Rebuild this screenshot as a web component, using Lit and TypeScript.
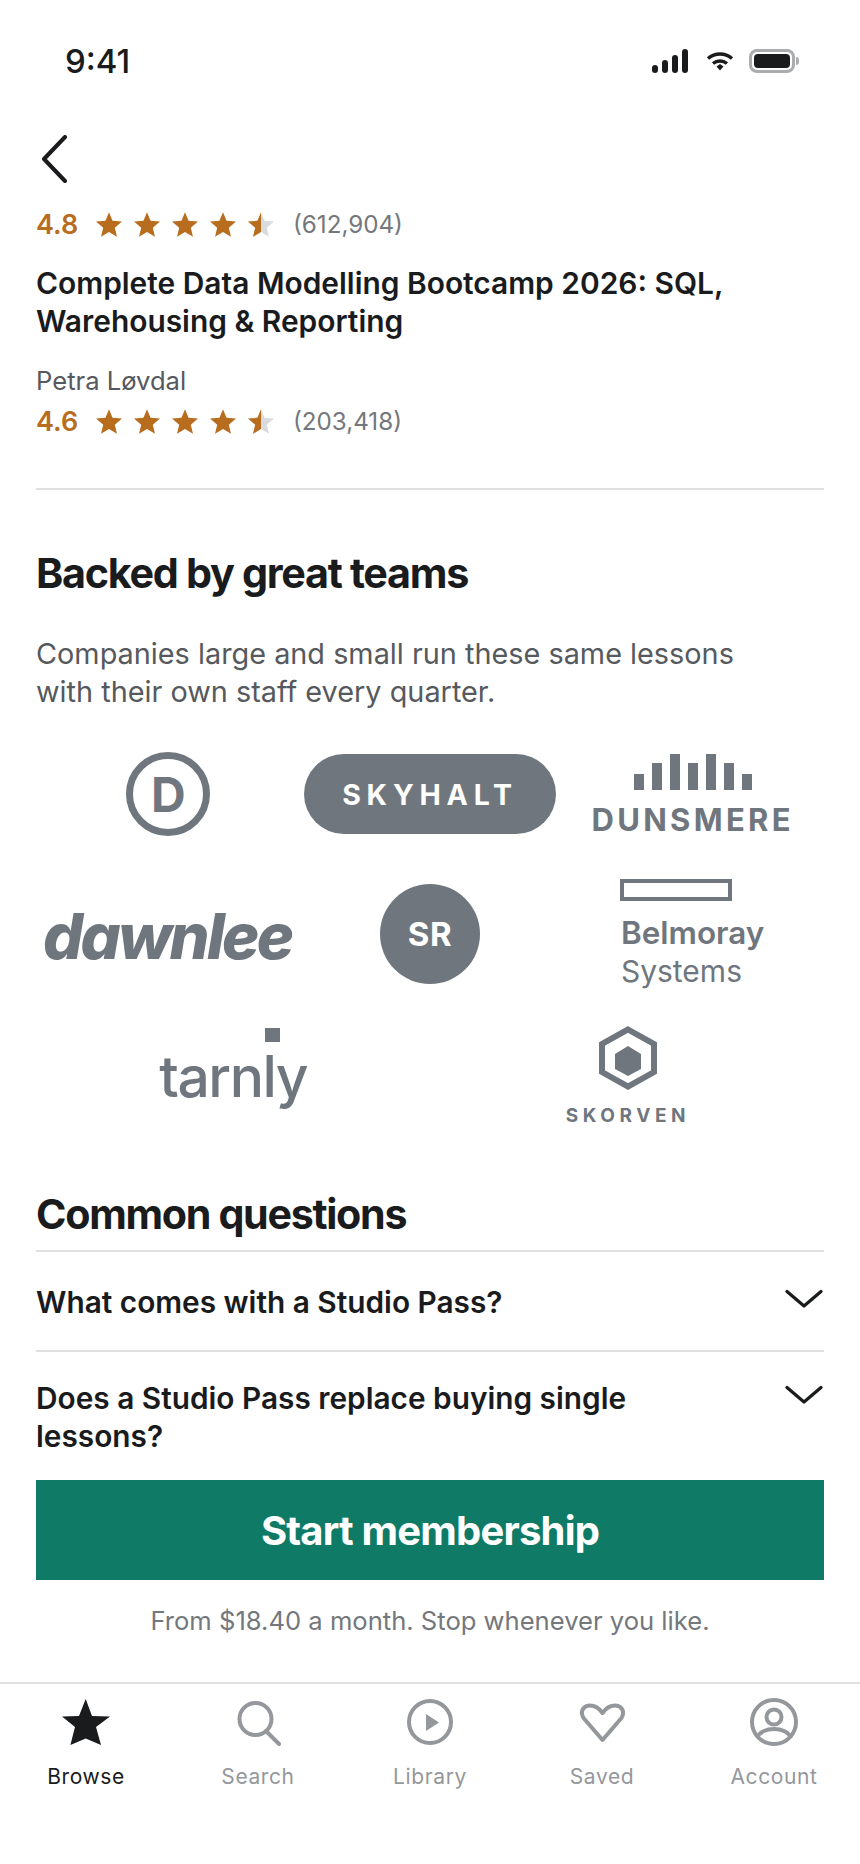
import { LitElement, html, css, svg } from 'lit';
import { customElement } from 'lit/decorators.js';

const STAR = '12,1 15.1,8.6 23.4,9.3 17.1,14.6 19,22.7 12,18.4 5,22.7 6.9,14.6 0.6,9.3 8.9,8.6';
const HALF = '12,1 12,18.4 5,22.7 6.9,14.6 0.6,9.3 8.9,8.6';

const star = (half = false) => html`<svg class="star" viewBox="0.6 1 22.8 21.7">
  ${half
    ? svg`<polygon points=${STAR} fill="#d9dbde"></polygon><polygon points=${HALF} fill="#b86d1e"></polygon>`
    : svg`<polygon points=${STAR} fill="#b86d1e"></polygon>`}
</svg>`;

const rating = (value: string, count: string) => html`<div class="rating">
  <span class="value">${value}</span>
  <span class="stars">${star()}${star()}${star()}${star()}${star(true)}</span>
  <span class="count">${count}</span>
</div>`;

const chevron = html`<svg class="chev" viewBox="0 0 38 20" fill="none" stroke="#1a1b1d" stroke-width="3.2" stroke-linecap="round" stroke-linejoin="round">
  <path d="M2 2.5 19 17 36 2.5"></path>
</svg>`;

const tabs = [
  {
    label: 'Browse',
    active: true,
    icon: svg`<polygon points="24.7,1 31,18 49,18.5 35,29 40,47 24.7,40.5 9.4,47 14,29 1,18.5 18,18" fill="#1a1b1d"></polygon>`
  },
  {
    label: 'Search',
    icon: svg`<circle cx="22.5" cy="21" r="16" fill="none" stroke="#94979b" stroke-width="4"></circle><path d="M33 33 46 46" stroke="#94979b" stroke-width="4" stroke-linecap="round"></path>`
  },
  {
    label: 'Library',
    icon: svg`<circle cx="25" cy="24" r="21" fill="none" stroke="#94979b" stroke-width="4"></circle><polygon points="21,16 34,24.5 21,33" fill="#94979b"></polygon>`
  },
  {
    label: 'Saved',
    icon: svg`<path d="M25.5 42 6.5 20C2 12 8 7.5 13 7.5 18 7.5 22 10 25.5 15 29 10 33 7.5 38 7.5 43 7.5 49 12 44.5 20Z" fill="none" stroke="#94979b" stroke-width="4" stroke-linejoin="round"></path>`
  },
  {
    label: 'Account',
    icon: svg`<circle cx="25" cy="24" r="22" fill="none" stroke="#94979b" stroke-width="4"></circle><circle cx="25" cy="19" r="7.5" fill="none" stroke="#94979b" stroke-width="4"></circle><path d="M8 40C12 28 38 28 42 40" fill="none" stroke="#94979b" stroke-width="4"></path>`
  }
];

@customElement('app-root')
export default class AppRoot extends LitElement {
  static styles = css`
    :host {
      display: block;
      width: 860px;
      height: 1864px;
      background: #fff;
      font-family: Inter, 'Liberation Sans', sans-serif;
      color: #1a1b1d;
      overflow: hidden;
    }

    .status {
      display: flex;
      align-items: center;
      justify-content: space-between;
      height: 24px;
      padding: 49px 61px 24px 65px;
    }

    .time {
      font-size: 33px;
      font-weight: 500;
      line-height: 24px;
    }

    .status-icons {
      display: flex;
      align-items: center;
      gap: 17px;
    }

    .signal {
      display: flex;
      align-items: flex-end;
      gap: 4px;
      height: 24px;
    }

    .signal i {
      width: 6px;
      border-radius: 3px;
      background: #1a1b1d;
    }

    .wifi {
      width: 28px;
      height: 20px;
      margin: 0 -2px 0 1px;
    }

    .battery {
      display: flex;
      align-items: center;
      gap: 1px;
    }

    .battery-body {
      width: 46px;
      height: 24px;
      box-sizing: border-box;
      border: 3px solid #aaacae;
      border-radius: 8px;
      padding: 2px;
    }

    .battery-body i {
      display: block;
      height: 100%;
      border-radius: 4px;
      background: #1a1b1d;
    }

    .battery-nub {
      width: 3px;
      height: 8px;
      border-radius: 0 3px 3px 0;
      background: #aaacae;
    }

    .page {
      padding: 0 36px;
    }

    .back {
      display: block;
      width: 28px;
      height: 48px;
      margin: 38px 0 0 5px;
    }

    .rating {
      display: flex;
      align-items: center;
      height: 30px;
    }

    .value {
      width: 60px;
      font-size: 27px;
      font-weight: 600;
      color: #b86d1e;
    }

    .stars {
      display: flex;
      gap: 12px;
      width: 197px;
    }

    .star {
      width: 26px;
      height: 25px;
    }

    .count {
      font-size: 24.2px;
      color: #74777b;
    }

    .top-rating {
      margin-top: 26px;
    }

    h1 {
      margin: 25px 0 0;
      font-size: 29.9px;
      font-weight: 600;
      line-height: 38px;
    }

    .author {
      margin: 23px 0 7px;
      font-size: 25.6px;
      line-height: 36px;
      color: #56595d;
    }

    .rule {
      height: 2px;
      background: #dfe0e2;
    }

    .course-rule {
      margin-top: 52px;
    }

    h2 {
      margin: 0;
      font-size: 41.3px;
      font-weight: 700;
      letter-spacing: -1.3px;
      line-height: 48px;
    }

    .teams-title {
      margin-top: 59px;
    }

    .lede {
      margin: 38px 0 0;
      font-size: 28.85px;
      line-height: 38px;
      color: #56595d;
    }

    .logo-row {
      display: grid;
      grid-template-columns: repeat(3, 1fr);
      align-items: center;
      justify-items: center;
      color: #6f767e;
    }

    .logo-row.first {
      height: 92px;
      margin-top: 37px;
    }

    .logo-row.second {
      height: 118px;
      margin-top: 35px;
    }

    .logo-row.third {
      display: flex;
      justify-content: space-around;
      align-items: flex-start;
      height: 96px;
      margin: 33px 0 0 -6px;
      padding-right: 4.5px;
    }

    .disc {
      display: flex;
      align-items: center;
      justify-content: center;
      width: 84px;
      height: 84px;
      margin-left: 2px;
      box-sizing: border-box;
      border: 7px solid currentColor;
      border-radius: 50%;
      font-size: 48px;
      font-weight: 700;
    }

    .pill {
      display: flex;
      align-items: center;
      justify-content: center;
      width: 252px;
      height: 80px;
      border-radius: 40px;
      background: currentColor;
    }

    .pill span {
      color: #fff;
      font-size: 28.5px;
      font-weight: 700;
      letter-spacing: 5.8px;
    }

    .dunsmere {
      display: flex;
      flex-direction: column;
      align-items: center;
      gap: 18px;
      margin-bottom: 2px;
    }

    .bars {
      display: flex;
      align-items: flex-end;
      gap: 8px;
      height: 36px;
    }

    .bars i {
      width: 10px;
      background: currentColor;
    }

    .dunsmere span {
      font-size: 31px;
      font-weight: 700;
      letter-spacing: 3.3px;
      line-height: 24px;
    }

    .dawnlee {
      padding-top: 4px;
      font-size: 63px;
      font-style: italic;
      font-weight: 800;
      letter-spacing: -2.7px;
      line-height: 64px;
    }

    .sr {
      display: flex;
      align-items: center;
      justify-content: center;
      width: 100px;
      height: 100px;
      border-radius: 50%;
      background: currentColor;
    }

    .sr span {
      color: #fff;
      font-size: 33px;
      font-weight: 700;
      letter-spacing: 0.5px;
    }

    .belmoray {
      display: flex;
      flex-direction: column;
      align-items: flex-start;
      font-size: 30px;
      line-height: 38px;
    }

    .belmoray i {
      display: block;
      width: 112px;
      height: 22px;
      box-sizing: border-box;
      border: 4px solid currentColor;
      margin: 0 0 13px -1px;
    }

    .belmoray b {
      font-size: 31.5px;
      font-weight: 600;
    }

    .tarnly {
      position: relative;
      font-size: 57px;
      font-weight: 500;
      letter-spacing: -1.5px;
      line-height: 72px;
      padding-top: 15px;
    }

    .tarnly i {
      position: absolute;
      top: 2px;
      left: 106px;
      width: 15px;
      height: 14px;
      background: currentColor;
    }

    .skorven {
      display: flex;
      flex-direction: column;
      align-items: center;
      gap: 18px;
    }

    .hex {
      width: 60px;
      height: 64px;
    }

    .skorven span {
      font-size: 19px;
      font-weight: 700;
      letter-spacing: 4.6px;
      line-height: 16px;
    }

    .faq-title {
      margin-top: 68px;
      padding-bottom: 12px;
      font-size: 41.2px;
    }

    .faq {
      display: flex;
      justify-content: space-between;
      align-items: flex-start;
      border-top: 2px solid #dfe0e2;
      font-size: 29.8px;
      font-weight: 600;
      line-height: 38px;
    }

    .faq.one {
      height: 100px;
      padding-top: 31px;
      box-sizing: border-box;
    }

    .faq.two {
      height: 130px;
      padding-top: 27px;
      box-sizing: border-box;
    }

    .faq span {
      width: 640px;
    }

    .chev {
      width: 38px;
      height: 20px;
      margin: 6px 1px 0 0;
    }

    .cta {
      display: flex;
      align-items: center;
      justify-content: center;
      height: 100px;
      background: #0f7b66;
      color: #fff;
      font-size: 40px;
      font-weight: 650;
      letter-spacing: -0.8px;
    }

    .note {
      margin-top: 26px;
      text-align: center;
      font-size: 25.6px;
      line-height: 30px;
      color: #74777b;
    }

    .tabbar {
      display: grid;
      grid-template-columns: repeat(5, 1fr);
      margin-top: 46px;
      border-top: 2px solid #dfe0e2;
    }

    .tab {
      display: flex;
      flex-direction: column;
      align-items: center;
      padding-top: 14px;
      font-size: 21px;
      line-height: 26px;
      color: #94979b;
      letter-spacing: 0.6px;
    }

    .tab.active {
      color: #1a1b1d;
    }

    .tab svg {
      width: 50px;
      height: 48px;
      margin-bottom: 18px;
    }
  `;

  render() {
    return html`
      <div class="status">
        <span class="time">9:41</span>
        <div class="status-icons">
          <div class="signal">
            <i style="height:8px"></i><i style="height:13px"></i><i style="height:18px"></i><i style="height:24px"></i>
          </div>
          <svg class="wifi" viewBox="0 0 28 20" fill="none" stroke="#1a1b1d" stroke-width="3.4">
            <path d="M2 7.5C9 1.5 19 1.5 26 7.5"></path>
            <path d="M7 12.5C11 9.2 17 9.2 21 12.5"></path>
            <polygon points="10.5,15.5 14,13 17.5,15.5 14,19.5" fill="#1a1b1d" stroke="none"></polygon>
          </svg>
          <div class="battery">
            <div class="battery-body"><i></i></div>
            <div class="battery-nub"></div>
          </div>
        </div>
      </div>
      <div class="page">
        <svg class="back" viewBox="0 0 28 48" fill="none" stroke="#1a1b1d" stroke-width="4" stroke-linecap="round" stroke-linejoin="round">
          <path d="M24 2 3 24 24 46"></path>
        </svg>
        <div class="top-rating">${rating('4.8', '(612,904)')}</div>
        <h1>Complete Data Modelling Bootcamp 2026: SQL,<br />Warehousing &amp; Reporting</h1>
        <div class="author">Petra Løvdal</div>
        ${rating('4.6', '(203,418)')}
        <div class="rule course-rule"></div>
        <h2 class="teams-title">Backed by great teams</h2>
        <p class="lede">Companies large and small run these same lessons<br />with their own staff every quarter.</p>

        <div class="logo-row first">
          <div class="disc">D</div>
          <div class="pill"><span>SKYHALT</span></div>
          <div class="dunsmere">
            <div class="bars">
              <i style="height:16px"></i><i style="height:27px"></i><i style="height:36px"></i><i style="height:27px"></i><i style="height:36px"></i><i style="height:27px"></i><i style="height:16px"></i>
            </div>
            <span>DUNSMERE</span>
          </div>
        </div>
        <div class="logo-row second">
          <div class="dawnlee">dawnlee</div>
          <div class="sr"><span>SR</span></div>
          <div class="belmoray">
            <i></i>
            <b>Belmoray</b>
            <span>Systems</span>
          </div>
        </div>
        <div class="logo-row third">
          <div class="tarnly"><i></i>tarnly</div>
          <div class="skorven">
            <svg class="hex" viewBox="0 0 60 64">
              <polygon points="30,3.5 56,18 56,46 30,60.5 4,46 4,18" fill="none" stroke="currentColor" stroke-width="6"></polygon>
              <polygon points="30,20 43,28 43,43 30,50 17,43 17,28" fill="currentColor"></polygon>
            </svg>
            <span>SKORVEN</span>
          </div>
        </div>

        <h2 class="faq-title">Common questions</h2>
        <div class="faq one"><span>What comes with a Studio Pass?</span>${chevron}</div>
        <div class="faq two"><span>Does a Studio Pass replace buying single lessons?</span>${chevron}</div>
        <div class="cta">Start membership</div>
        <div class="note">From $18.40 a month. Stop whenever you like.</div>
      </div>
      <div class="tabbar">
        ${tabs.map(
          (t) => html`<div class="tab ${t.active ? 'active' : ''}">
            <svg viewBox="0 0 50 48">${t.icon}</svg>
            <span>${t.label}</span>
          </div>`
        )}
      </div>
    `;
  }
}
